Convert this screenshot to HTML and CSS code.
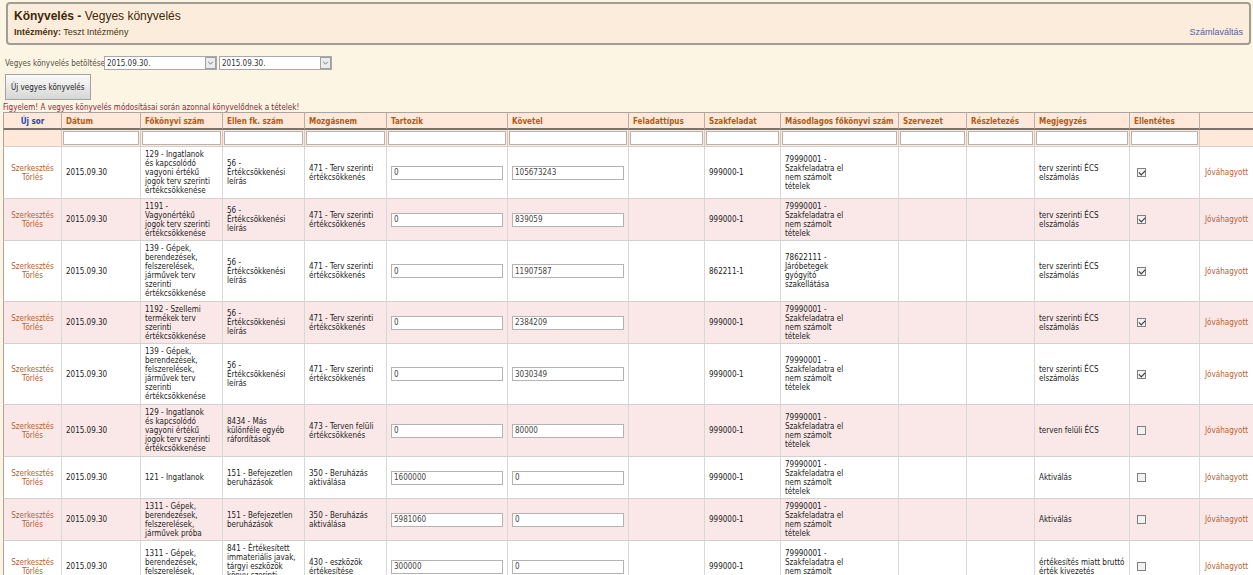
FILE: index.html
```
<!DOCTYPE html>
<html lang="hu">
<head>
<meta charset="utf-8">
<title>Könyvelés - Vegyes könyvelés</title>
<link rel="stylesheet" href="styles.css">
</head>
<body>
<header class="banner">
  <div>
    <h1 class="banner-title"><b>Könyvelés -</b> Vegyes könyvelés</h1>
    <p class="banner-sub"><b>Intézmény:</b> Teszt Intézmény</p>
  </div>
  <a class="banner-link" href="#">Számlaváltás</a>
</header>
<main>
  <form class="toolbar">
    <div class="period">
      <label for="from">Vegyes könyvelés betöltése</label>
      <span class="picker"><select id="from"><option>2015.09.30.</option></select><svg viewBox="0 0 11 12" aria-hidden="true"><rect x=".5" y=".5" width="10" height="11" fill="#ececec" stroke="#a0a0a0"/><path d="M3.2 4.8l2.3 2.3 2.3-2.3" fill="none" stroke="#777"/></svg></span>
      <span class="picker"><select id="to" aria-label="Időszak vége"><option>2015.09.30.</option></select><svg viewBox="0 0 11 12" aria-hidden="true"><rect x=".5" y=".5" width="10" height="11" fill="#ececec" stroke="#a0a0a0"/><path d="M3.2 4.8l2.3 2.3 2.3-2.3" fill="none" stroke="#777"/></svg></span>
    </div>
    <button class="new-button" type="button">Új vegyes könyvelés</button>
  </form>
  <p class="warning">Figyelem! A vegyes könyvelés módosításai során azonnal könyvelődnek a tételek!</p>
  <table class="grid">
    <colgroup><col class="c-act"><col class="c-date"><col class="c-name"><col class="c-name"><col class="c-name"><col class="c-sum"><col class="c-sum"><col class="c-task"><col class="c-task"><col class="c-second"><col class="c-org"><col class="c-org"><col class="c-note"><col class="c-flag"><col class="c-state"></colgroup>
    <thead>
      <tr class="head"><th class="act"><a href="#">Új sor</a></th><th>Dátum</th><th>Főkönyvi szám</th><th>Ellen fk. szám</th><th>Mozgásnem</th><th>Tartozik</th><th>Követel</th><th>Feladattípus</th><th>Szakfeladat</th><th>Másodlagos főkönyvi szám</th><th>Szervezet</th><th>Részletezés</th><th>Megjegyzés</th><th>Ellentétes</th><th></th></tr>
      <tr class="filters"><td></td><td><input type="text" aria-label="Dátum"></td><td><input type="text" aria-label="Főkönyvi szám"></td><td><input type="text" aria-label="Ellen fk. szám"></td><td><input type="text" aria-label="Mozgásnem"></td><td><input type="text" aria-label="Tartozik"></td><td><input type="text" aria-label="Követel"></td><td><input type="text" aria-label="Feladattípus"></td><td><input type="text" aria-label="Szakfeladat"></td><td><input type="text" aria-label="Másodlagos főkönyvi szám"></td><td><input type="text" aria-label="Szervezet"></td><td><input type="text" aria-label="Részletezés"></td><td><input type="text" aria-label="Megjegyzés"></td><td><input type="text" aria-label="Ellentétes"></td><td></td></tr>
    </thead>
    <tbody>
      <tr class="h5"><td class="act"><a href="#">Szerkesztés</a><br><a href="#">Törlés</a></td><td>2015.09.30</td><td>129 - Ingatlanok<br>és kapcsolódó<br>vagyoni értékű<br>jogok terv szerinti<br>értékcsökkenése</td><td>56 -<br>Értékcsökkenési<br>leírás</td><td>471 - Terv szerinti<br>értékcsökkenés</td><td><input type="text" aria-label="Tartozik" value="0"></td><td><input type="text" aria-label="Követel" value="105673243"></td><td></td><td>999000-1</td><td>79990001 -<br>Szakfeladatra el<br>nem számolt<br>tételek</td><td></td><td></td><td>terv szerinti ÉCS<br>elszámolás</td><td><input type="checkbox" aria-label="Ellentétes" checked></td><td class="state"><a href="#">Jóváhagyott</a></td></tr>
      <tr class="h4"><td class="act"><a href="#">Szerkesztés</a><br><a href="#">Törlés</a></td><td>2015.09.30</td><td>1191 -<br>Vagyonértékű<br>jogok terv szerinti<br>értékcsökkenése</td><td>56 -<br>Értékcsökkenési<br>leírás</td><td>471 - Terv szerinti<br>értékcsökkenés</td><td><input type="text" aria-label="Tartozik" value="0"></td><td><input type="text" aria-label="Követel" value="839059"></td><td></td><td>999000-1</td><td>79990001 -<br>Szakfeladatra el<br>nem számolt<br>tételek</td><td></td><td></td><td>terv szerinti ÉCS<br>elszámolás</td><td><input type="checkbox" aria-label="Ellentétes" checked></td><td class="state"><a href="#">Jóváhagyott</a></td></tr>
      <tr class="h6"><td class="act"><a href="#">Szerkesztés</a><br><a href="#">Törlés</a></td><td>2015.09.30</td><td>139 - Gépek,<br>berendezések,<br>felszerelések,<br>járművek terv<br>szerinti<br>értékcsökkenése</td><td>56 -<br>Értékcsökkenési<br>leírás</td><td>471 - Terv szerinti<br>értékcsökkenés</td><td><input type="text" aria-label="Tartozik" value="0"></td><td><input type="text" aria-label="Követel" value="11907587"></td><td></td><td>862211-1</td><td>78622111 -<br>Járóbetegek<br>gyógyító<br>szakellátása</td><td></td><td></td><td>terv szerinti ÉCS<br>elszámolás</td><td><input type="checkbox" aria-label="Ellentétes" checked></td><td class="state"><a href="#">Jóváhagyott</a></td></tr>
      <tr class="h4"><td class="act"><a href="#">Szerkesztés</a><br><a href="#">Törlés</a></td><td>2015.09.30</td><td>1192 - Szellemi<br>termékek terv<br>szerinti<br>értékcsökkenése</td><td>56 -<br>Értékcsökkenési<br>leírás</td><td>471 - Terv szerinti<br>értékcsökkenés</td><td><input type="text" aria-label="Tartozik" value="0"></td><td><input type="text" aria-label="Követel" value="2384209"></td><td></td><td>999000-1</td><td>79990001 -<br>Szakfeladatra el<br>nem számolt<br>tételek</td><td></td><td></td><td>terv szerinti ÉCS<br>elszámolás</td><td><input type="checkbox" aria-label="Ellentétes" checked></td><td class="state"><a href="#">Jóváhagyott</a></td></tr>
      <tr class="h6"><td class="act"><a href="#">Szerkesztés</a><br><a href="#">Törlés</a></td><td>2015.09.30</td><td>139 - Gépek,<br>berendezések,<br>felszerelések,<br>járművek terv<br>szerinti<br>értékcsökkenése</td><td>56 -<br>Értékcsökkenési<br>leírás</td><td>471 - Terv szerinti<br>értékcsökkenés</td><td><input type="text" aria-label="Tartozik" value="0"></td><td><input type="text" aria-label="Követel" value="3030349"></td><td></td><td>999000-1</td><td>79990001 -<br>Szakfeladatra el<br>nem számolt<br>tételek</td><td></td><td></td><td>terv szerinti ÉCS<br>elszámolás</td><td><input type="checkbox" aria-label="Ellentétes" checked></td><td class="state"><a href="#">Jóváhagyott</a></td></tr>
      <tr class="h5"><td class="act"><a href="#">Szerkesztés</a><br><a href="#">Törlés</a></td><td>2015.09.30</td><td>129 - Ingatlanok<br>és kapcsolódó<br>vagyoni értékű<br>jogok terv szerinti<br>értékcsökkenése</td><td>8434 - Más<br>különféle egyéb<br>ráfordítások</td><td>473 - Terven felüli<br>értékcsökkenés</td><td><input type="text" aria-label="Tartozik" value="0"></td><td><input type="text" aria-label="Követel" value="80000"></td><td></td><td>999000-1</td><td>79990001 -<br>Szakfeladatra el<br>nem számolt<br>tételek</td><td></td><td></td><td>terven felüli ÉCS</td><td><input type="checkbox" aria-label="Ellentétes"></td><td class="state"><a href="#">Jóváhagyott</a></td></tr>
      <tr class="h4"><td class="act"><a href="#">Szerkesztés</a><br><a href="#">Törlés</a></td><td>2015.09.30</td><td>121 - Ingatlanok</td><td>151 - Befejezetlen<br>beruházások</td><td>350 - Beruházás<br>aktiválása</td><td><input type="text" aria-label="Tartozik" value="1600000"></td><td><input type="text" aria-label="Követel" value="0"></td><td></td><td>999000-1</td><td>79990001 -<br>Szakfeladatra el<br>nem számolt<br>tételek</td><td></td><td></td><td>Aktiválás</td><td><input type="checkbox" aria-label="Ellentétes"></td><td class="state"><a href="#">Jóváhagyott</a></td></tr>
      <tr class="h4"><td class="act"><a href="#">Szerkesztés</a><br><a href="#">Törlés</a></td><td>2015.09.30</td><td>1311 - Gépek,<br>berendezések,<br>felszerelések,<br>járművek próba</td><td>151 - Befejezetlen<br>beruházások</td><td>350 - Beruházás<br>aktiválása</td><td><input type="text" aria-label="Tartozik" value="5981060"></td><td><input type="text" aria-label="Követel" value="0"></td><td></td><td>999000-1</td><td>79990001 -<br>Szakfeladatra el<br>nem számolt<br>tételek</td><td></td><td></td><td>Aktiválás</td><td><input type="checkbox" aria-label="Ellentétes"></td><td class="state"><a href="#">Jóváhagyott</a></td></tr>
      <tr class="h5"><td class="act"><a href="#">Szerkesztés</a><br><a href="#">Törlés</a></td><td>2015.09.30</td><td>1311 - Gépek,<br>berendezések,<br>felszerelések,<br>járművek próba</td><td>841 - Értékesített<br>immateriális javak,<br>tárgyi eszközök<br>könyv szerinti<br>értéke</td><td>430 - eszközök<br>értékesítése</td><td><input type="text" aria-label="Tartozik" value="300000"></td><td><input type="text" aria-label="Követel" value="0"></td><td></td><td>999000-1</td><td>79990001 -<br>Szakfeladatra el<br>nem számolt<br>tételek</td><td></td><td></td><td>értékesítés miatt bruttó<br>érték kivezetés</td><td><input type="checkbox" aria-label="Ellentétes"></td><td class="state"><a href="#">Jóváhagyott</a></td></tr>
    </tbody>
  </table>
</main>
</body>
</html>
```
FILE: styles.css
```
* { box-sizing: border-box; }
body {
  margin: 0;
  height: 100vh;
  overflow: auto;
  scrollbar-width: none;
  background: #fdf5e3;
  color: #222;
  font: 8px/9px "DejaVu Sans Condensed", "DejaVu Sans", sans-serif;
}
a { text-decoration: none; color: #b5622f; }
input, select, button { font: inherit; color: inherit; margin: 0; border-radius: 0; }

.banner {
  display: flex;
  justify-content: space-between;
  align-items: flex-end;
  margin: 2px 2px 0 6px;
  padding: 5px 6px;
  border: 2px solid #a09d96;
  border-radius: 4px;
  background: #fcecdb;
  font: 9px/12px "Liberation Sans", Arial, sans-serif;
  color: #4a3010;
}
.banner-title { margin: 0; font-size: 12px; line-height: 15px; font-weight: normal; color: #3e2808; }
.banner-sub { margin: 2px 0 0; }
.banner-link { color: #5560a8; }

.toolbar { padding: 11px 5px 0; }
.period { display: flex; align-items: center; gap: 2px; color: #55503f; }
.period label { width: 97px; white-space: nowrap; }
.picker { display: grid; width: 113px; }
.picker select, .picker svg { grid-area: 1 / 1; }
.picker select {
  appearance: none;
  width: 100%;
  height: 14px;
  padding: 1px 2px 0;
  border: 1px solid #a8a8a8;
  background: #fff;
  color: #333;
}
.picker svg { width: 11px; height: 12px; place-self: center end; margin-right: 1px; pointer-events: none; }
.new-button {
  display: block;
  height: 26px;
  margin-top: 4px;
  padding: 0 5px;
  border: 1px solid #a3a3a3;
  background: linear-gradient(#fbfbfb, #d6d6d6);
  color: #222;
}
.warning { margin: 3px 0 0 3px; color: #98203c; }

.grid { width: 100%; table-layout: fixed; border-collapse: separate; border-spacing: 0; padding-left: 3px; background: #fdf5e3; }
.c-act { width: 59px; }
.c-date { width: 79px; }
.c-name { width: 82px; }
.c-sum { width: 121px; }
.c-task { width: 76px; }
.c-second { width: 118px; }
.c-org { width: 68px; }
.c-note { width: 95px; }
.c-flag { width: 70px; }
.c-state { width: 55px; }
.grid th, .grid td { padding: 2px 4px; text-align: left; vertical-align: middle; border-right: 1px solid #d8d8d8; border-bottom: 1px solid #d4d0d0; }
.grid th:first-child, .grid td:first-child { border-left: 1px solid #aaa49c; }
.grid th:last-child, .grid td:last-child { border-right: 0; }
.grid th { height: 18px; padding-top: 2px; padding-bottom: 0; border-top: 1px solid #aaa49c; border-right-color: #b9aea5; border-bottom: 2px solid #7d726a; background: #fee8d9; color: #b05a14; white-space: nowrap; }
.grid .act { text-align: center; }
.grid th a { color: #2a44b8; }
.grid .filters td { height: 17px; padding: 1px; border-right-color: #d6c8be; background: #fee8d9; }
.grid tbody td { background: #fff; white-space: nowrap; }
.grid tbody tr:nth-child(even) td { background: #fae8e8; }
.h4 { height: 42px; }
.h5 { height: 52px; }
.h6 { height: 61px; }
.grid input[type="text"] { display: block; width: 100%; height: 14px; padding: 1px 2px; border: 1px solid #b3b3b3; background: #fff; color: #444; }
.grid .state { padding-left: 5px; padding-right: 0; }
.grid input[type="checkbox"] {
  appearance: none;
  display: block;
  width: 9px;
  height: 9px;
  margin-left: 3px;
  border: 1px solid #808080;
  background: #f1f1f1;
}
.grid input[type="checkbox"]:checked::before {
  content: "";
  display: block;
  width: 5px;
  height: 3px;
  margin: 1px;
  border-left: 1px solid #333;
  border-bottom: 1px solid #333;
  transform: rotate(-45deg);
}
```
